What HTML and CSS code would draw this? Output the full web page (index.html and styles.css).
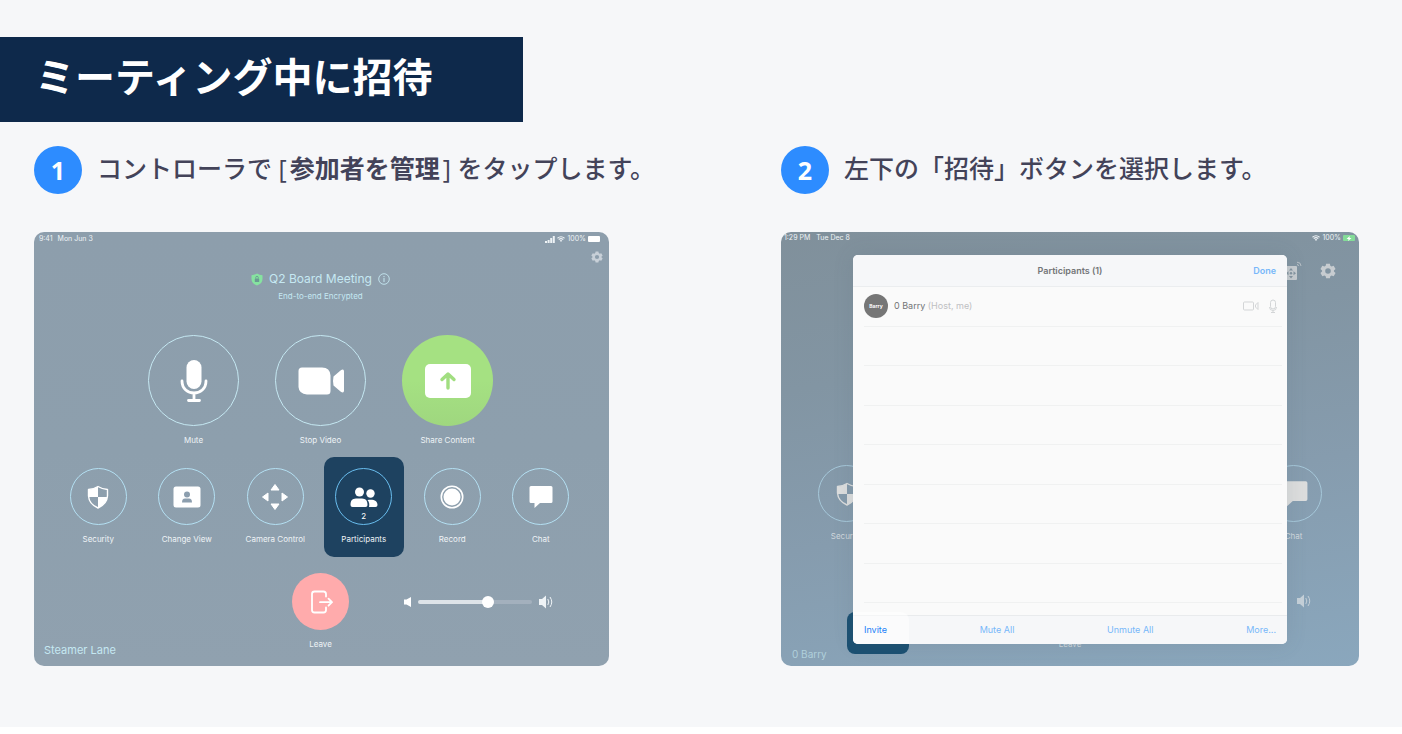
FILE: index.html
```html
<!DOCTYPE html>
<html lang="ja">
<head>
  <meta charset="UTF-8">
  <meta name="viewport" content="width=device-width, initial-scale=1.0">
  <title>ミーティング中に招待</title>
  <link rel="stylesheet" href="styles.css">
</head>
<body>
  <!-- shared icons -->
  <svg class="sprite" aria-hidden="true">
    <symbol id="icon-gear" viewBox="0 0 24 24">
      <path fill="currentColor" fill-rule="evenodd" d="M9.2 1h5.6l.7 3.2 1.9 1.1 3.1-1 2.8 4.8-2.4 2.2v1.4l2.4 2.2-2.8 4.8-3.1-1-1.9 1.1-.7 3.2H9.2l-.7-3.2-1.9-1.1-3.1 1L.7 14.9l2.4-2.2v-1.4L.7 9.1l2.8-4.8 3.1 1 1.9-1.1zM12 7.800a4.200 4.200 0 1 0 0 8.400 4.200 4.200 0 0 0 0-8.400z"/>
    </symbol>
    <symbol id="icon-wifi" viewBox="0 0 16 12">
      <path fill="none" stroke="currentColor" stroke-width="2.2" d="M1 4.500q7-6 14 0M3.500 7.300q4.500-4 9 0"/>
      <path fill="currentColor" d="M5.500 9q2.500-2 5 0L8 12z"/>
    </symbol>
    <symbol id="icon-security" viewBox="0 0 22 24">
      <path fill="none" stroke="currentColor" stroke-width="1.4" stroke-linejoin="round" d="M11 1.500Q15 4 20.500 4.500V11Q20 19 11 23 2 19 1.500 11V4.500Q7 4 11 1.500z"/>
      <path fill="currentColor" d="M11 1.500V12H1.500V4.500Q7 4 11 1.500zM11 12h9.400Q19.500 19 11 23z"/>
    </symbol>
    <symbol id="icon-chat" viewBox="0 0 24 24">
      <path fill="currentColor" d="M2 1h20a1.500 1.500 0 0 1 1.500 1.500v14A1.500 1.500 0 0 1 22 18H11l-5.500 5V18H2a1.500 1.500 0 0 1-1.500-1.500v-14A1.500 1.500 0 0 1 2 1z"/>
    </symbol>
    <symbol id="icon-volume" viewBox="0 0 16 14">
      <path fill="currentColor" d="M1 4h3l4-3.500v13L4 10H1z"/>
      <path fill="none" stroke="currentColor" d="M9.800 4q2 3 0 6M12 2q3.500 5 0 10"/>
    </symbol>
  </svg>

  <main class="page">
    <h1 class="page-title">ミーティング中に招待</h1>

    <div class="steps">
      <section class="step">
        <h2 class="step-title">
          <span class="step-number">1</span>
          <span class="step-text">コントローラで [<strong>参加者を管理</strong>] をタップします。</span>
        </h2>

        <div class="tablet tablet-controller">
          <div class="status">
            <span class="status-left"><span>9:41</span><span>Mon Jun 3</span></span>
            <span class="status-right">
              <svg width="10" height="7" viewBox="0 0 10 7"><path fill="currentColor" d="M0 5h2v2H0zM2.600 4h2v3h-2zM5.200 2h2v5h-2zM7.800 0h2v7h-2z"/></svg>
              <svg width="8" height="6"><use href="#icon-wifi"/></svg>
              <span>100%</span>
              <span class="battery"></span>
            </span>
          </div>

          <div class="toolbar">
            <button class="icon-button" aria-label="Settings"><svg width="12" height="12"><use href="#icon-gear"/></svg></button>
          </div>

          <div class="meeting-name">
            <svg width="12" height="13" viewBox="0 0 12 13"><path fill="#86e3a0" d="M6 .5Q8.500 2 11.500 2.200V6Q11.500 10.500 6 12.500.5 10.500.5 6V2.200Q3.500 2 6 .5z"/><rect x="3.8" y="5.5" width="4.4" height="3.5" rx=".6" fill="#6a9b93"/><path fill="none" stroke="#6a9b93" stroke-width=".9" d="M4.700 5.500V4.600a1.300 1.300 0 0 1 2.600 0v.9"/></svg>
            <span>Q2 Board Meeting</span>
            <svg width="12" height="12" viewBox="0 0 12 12"><circle cx="6" cy="6" r="5.3" fill="none" stroke="currentColor" stroke-width=".9"/><path fill="none" stroke="currentColor" d="M6 5v4M6 3v1.200"/></svg>
          </div>
          <div class="meeting-note">End-to-end Encrypted</div>

          <div class="main-actions">
            <button class="action">
              <span class="circle circle-large">
                <svg width="28" height="44" viewBox="0 0 28 44"><rect x="6.5" y="1" width="15" height="29" rx="7.5" fill="#fff"/><path fill="none" stroke="#fff" stroke-width="2.8" stroke-linecap="round" d="M2 22c0 16 24 16 24 0M14 34v7M8.500 41.500h11"/></svg>
              </span>
              <span>Mute</span>
            </button>
            <button class="action">
              <span class="circle circle-large">
                <svg width="46" height="28" viewBox="0 0 46 28"><path fill="#fff" d="M4 .5h20q8 0 8.500 8V24q0 3.500-3.500 3.500H9Q1 27 .5 20V4Q.5.5 4 .5zM35.500 9.500l7-6q3.500-2.500 3.500 1v19q0 3.500-3.500 1l-7-6q-1-4.500 0-9z"/></svg>
              </span>
              <span>Stop Video</span>
            </button>
            <button class="action">
              <span class="circle circle-large circle-share">
                <svg width="46" height="34" viewBox="0 0 46 34"><rect width="46" height="34" rx="5" fill="#fff"/><path fill="none" stroke="#a1de80" stroke-width="3.4" stroke-linecap="round" stroke-linejoin="round" d="M23 24V10.500M17 15.500l6-5.500 6 5.500"/></svg>
              </span>
              <span>Share Content</span>
            </button>
          </div>

          <div class="sub-actions">
            <button class="action tile">
              <span class="circle"><svg width="22" height="24"><use href="#icon-security"/></svg></span>
              <span>Security</span>
            </button>
            <button class="action tile">
              <span class="circle">
                <svg width="28" height="22" viewBox="0 0 28 22"><rect x=".5" y=".5" width="27" height="21" rx="2.5" fill="#fff"/><circle cx="14" cy="8.5" r="3" fill="#8c9eae"/><path fill="#8c9eae" d="M9 16.500q0-4 3-4h4q3 0 3 4z"/></svg>
              </span>
              <span>Change View</span>
            </button>
            <button class="action tile">
              <span class="circle">
                <svg width="28" height="28" viewBox="0 0 28 28"><path fill="#fff" stroke="#fff" stroke-linejoin="round" d="M14 1.500l4 5.500h-8zM14 26.500l4-5.500h-8zM1.500 14L7 10v8zM26.500 14L21 10v8z"/></svg>
              </span>
              <span>Camera Control</span>
            </button>
            <button class="action tile tile-active">
              <span class="circle">
                <svg width="28" height="22" viewBox="0 0 28 22"><circle cx="9.5" cy="6" r="4.5" fill="#fff"/><circle cx="20.5" cy="7.5" r="4.2" fill="#fff"/><path fill="#fff" d="M.5 19c0-7 4-6.500 8.500-6.500s8.500-.5 8.500 6.500q0 2-2 2h-13q-2 0-2-2zM17.500 14c6-1 10 .5 10 5q0 2-2 2h-6.500q1-4-1.500-7z"/></svg>
                <span class="count">2</span>
              </span>
              <span>Participants</span>
            </button>
            <button class="action tile">
              <span class="circle">
                <svg width="24" height="24" viewBox="0 0 24 24"><circle cx="12" cy="12" r="8.5" fill="#fff"/><circle cx="12" cy="12" r="10.7" fill="none" stroke="#fff" stroke-width="1.6"/></svg>
              </span>
              <span>Record</span>
            </button>
            <button class="action tile">
              <span class="circle"><svg width="24" height="24"><use href="#icon-chat"/></svg></span>
              <span>Chat</span>
            </button>
          </div>

          <div class="bottom">
            <span class="room-name">Steamer Lane</span>
            <button class="action">
              <span class="circle circle-leave">
                <svg width="26" height="24" viewBox="0 0 26 24"><path fill="none" stroke="#fff" stroke-width="1.8" stroke-linecap="round" stroke-linejoin="round" d="M18 6.500V4q0-2.500-2.500-2.500h-9Q4 1.500 4 4v16q0 2.500 2.500 2.500h9Q18 22.500 18 20v-2.500M12 12.200h12M20.500 8.700l3.500 3.500-3.500 3.500"/></svg>
              </span>
              <span>Leave</span>
            </button>
            <label class="volume">
              <svg width="9" height="12" viewBox="0 0 9 12"><path fill="#fff" d="M1 3.500h2.500L8 1v10L3.500 8.500H1z"/></svg>
              <input type="range" min="0" max="100" value="63" aria-label="Volume">
              <svg width="16" height="14"><use href="#icon-volume"/></svg>
            </label>
          </div>
        </div>
      </section>

      <section class="step">
        <h2 class="step-title">
          <span class="step-number">2</span>
          <span class="step-text">左下の「招待」ボタンを選択します。</span>
        </h2>

        <div class="tablet tablet-participants">
          <div class="status">
            <span class="status-left"><span>1:29 PM</span><span>Tue Dec 8</span></span>
            <span class="status-right">
              <svg width="8" height="6"><use href="#icon-wifi"/></svg>
              <span>100%</span>
              <span class="battery battery-charging"><svg width="6" height="5" viewBox="0 0 6 5"><path fill="#fff" d="M3.800 0L.5 3h2L2.200 5 5.500 2h-2z"/></svg></span>
            </span>
          </div>

          <div class="toolbar">
            <button class="icon-button" aria-label="Camera control">
              <svg width="24" height="20" viewBox="0 0 24 20"><rect x="1" y="5" width="18" height="14" rx="1" fill="currentColor"/><path fill="#8494a0" d="M13 7l2 2.500h-4zM13 17.500l2-2.500h-4zM8 12.200l2.500-2v4zM18 12.200l-2.500-2v4z"/><circle cx="13" cy="12.200" r="1.200" fill="#8494a0"/><path fill="none" stroke="currentColor" stroke-width=".8" d="M19 3.500q1.500 0 1.500 1.500M19 1.200q4 0 4 3.800"/></svg>
            </button>
            <button class="icon-button" aria-label="Settings"><svg width="16" height="16"><use href="#icon-gear"/></svg></button>
          </div>

          <div class="side-actions">
            <button class="action">
              <span class="circle"><svg width="22" height="24"><use href="#icon-security"/></svg></span>
              <span>Security</span>
            </button>
            <button class="action">
              <span class="circle"><svg width="28" height="28"><use href="#icon-chat"/></svg></span>
              <span>Chat</span>
            </button>
          </div>

          <div class="side-volume"><svg width="18" height="14"><use href="#icon-volume"/></svg></div>

          <div class="bottom">
            <span class="room-name">0 Barry</span>
            <span class="leave-label">Leave</span>
          </div>

          <div class="invite-shade"></div>

          <div class="dialog" role="dialog" aria-label="Participants">
            <header class="dialog-header">
              <h3>Participants (1)</h3>
              <button class="text-button">Done</button>
            </header>
            <ul class="people">
              <li>
                <span class="avatar">Barry</span>
                <span class="person">0 Barry <small>(Host, me)</small></span>
                <svg width="16" height="10" viewBox="0 0 16 10"><path fill="none" stroke="#d3d5d7" d="M1.500 1h8q1 0 1 1v6q0 1-1 1h-8q-1 0-1-1V2q0-1 1-1zM12.500 4l2.500-2.500v7L12.500 6z"/></svg>
                <svg width="8" height="14" viewBox="0 0 8 14"><path fill="none" stroke="#d3d5d7" d="M1.500 3.500a2.500 2.500 0 0 1 5 0v4a2.500 2.500 0 0 1-5 0zM.5 8q0 3.500 3.500 3.500T7.500 8M4 11.500V13M2 13.500h4"/></svg>
              </li>
              <li></li>
              <li></li>
              <li></li>
              <li></li>
              <li></li>
              <li></li>
              <li></li>
            </ul>
            <footer class="dialog-footer">
              <button class="text-button invite">Invite</button>
              <button class="text-button">Mute All</button>
              <button class="text-button">Unmute All</button>
              <button class="text-button">More...</button>
            </footer>
          </div>
        </div>
      </section>
    </div>
  </main>
</body>
</html>
```
FILE: styles.css
```css
* {
  margin: 0;
  padding: 0;
  box-sizing: border-box;
}

body {
  background-color: #fff;
  font-family: 'Open Sans', 'Noto Sans CJK JP', sans-serif;
}

button {
  border: none;
  background: none;
  color: inherit;
  font: inherit;
  cursor: pointer;
}

svg {
  display: block;
  flex-shrink: 0;
}

.sprite {
  position: absolute;
  width: 0;
  height: 0;
}

.page {
  padding: 37px 0 61px;
  background-color: #f6f7f9;
}

.page-title {
  width: fit-content;
  padding: 10px 90px 15px 35px;
  background-color: #0e294b;
  color: #fff;
  font-size: 40px;
  line-height: 60px;
}

.steps {
  display: grid;
  grid-template-columns: minmax(0, 575fr) minmax(0, 578fr);
  column-gap: 172px;
  padding: 24px 43px 0 34px;
}

.step-title {
  display: flex;
  align-items: center;
  gap: 15px;
  margin-bottom: 38px;
  color: #434359;
  font-size: 25px;
  font-weight: 500;
  line-height: 40px;
  white-space: nowrap;
}

.step-title strong {
  margin: 0 3px;
}

.step-number {
  flex-shrink: 0;
  width: 48px;
  height: 48px;
  border-radius: 50%;
  background-color: #2d8cff;
  color: #fff;
  font-weight: bold;
  line-height: 48px;
  text-align: center;
}

.step-text {
  padding-bottom: 4px;
}

/* tablets */
.tablet {
  position: relative;
  display: flex;
  flex-direction: column;
  min-height: 434px;
  border-radius: 10px;
  color: #eef3f6;
  font-family: Inter, sans-serif;
  font-size: 8px;
  line-height: 12px;
  overflow: hidden;
}

.tablet-controller {
  background: linear-gradient(#8d9eac, #8d9fad 50%, #90a1af);
}

.tablet-participants {
  background: linear-gradient(170deg, #80909b, #8295a3 30%, #869cae 60%, #8aa7bd);
}

.status {
  display: flex;
  justify-content: space-between;
  padding: 1px 9px 0 5px;
  font-size: 7px;
}

.status-left,
.status-right {
  display: flex;
  align-items: center;
  gap: 5px;
}

.status-right {
  gap: 2px;
}

.battery {
  width: 12px;
  height: 6px;
  border-radius: 1px;
  background-color: #fff;
}

.battery-charging {
  display: flex;
  align-items: center;
  justify-content: center;
  background-color: #83dc98;
}

.toolbar {
  display: flex;
  align-items: center;
  justify-content: flex-end;
  height: 24px;
  padding-right: 6px;
  color: #c8d0d8;
}

.meeting-name {
  display: flex;
  align-items: center;
  justify-content: center;
  gap: 6px;
  padding-right: 2px;
  color: #c5e8f2;
  font-size: 12px;
  line-height: 20px;
}

.meeting-note {
  margin: 1px 0 33px;
  padding-right: 2px;
  color: #c5e8f2;
  text-align: center;
}

.action {
  display: flex;
  flex-direction: column;
  align-items: center;
  gap: 8px;
  white-space: nowrap;
}

.circle {
  position: relative;
  display: flex;
  align-items: center;
  justify-content: center;
  width: 57px;
  height: 57px;
  border: 1px solid #b4e0f3;
  border-radius: 50%;
  color: #fff;
}

.circle-large {
  width: 91px;
  height: 91px;
  border-color: #c5e8f2;
}

.circle-share {
  border: none;
  background: linear-gradient(#a5e182 50%, #9fd77f);
}

.circle-leave {
  border: none;
  background-color: #ffabac;
}

.main-actions {
  display: grid;
  grid-template-columns: repeat(3, 127px);
  justify-content: center;
  padding-right: 2px;
}

.sub-actions {
  display: grid;
  grid-template-columns: repeat(6, 1fr);
  justify-items: center;
  padding: 11px 24px 0 20px;
}

.tile {
  width: 80px;
  height: 100px;
  padding-top: 11px;
  justify-content: flex-start;
  border-radius: 10px;
}

.tile-active {
  background-color: #1e4260;
}

.tile-active .circle {
  border-color: #69bdee;
}

.count {
  position: absolute;
  bottom: 2px;
}

.bottom {
  display: grid;
  flex: 1;
  grid-template-columns: 1fr auto 1fr;
  align-items: start;
  padding: 16px 12px 8px 10px;
}

.room-name {
  align-self: end;
  color: #c5e8f2;
  font-size: 11px;
  line-height: 16px;
}

.volume {
  display: flex;
  align-items: center;
  gap: 6px;
  height: 57px;
  margin-left: 54px;
}

.volume input {
  width: 114px;
  height: 12px;
  appearance: none;
  background: none;
}

.volume input::-webkit-slider-runnable-track {
  height: 4px;
  border-radius: 2px;
  background: linear-gradient(90deg, #dde3e8 62%, #a3b0bd 62%);
}

.volume input::-webkit-slider-thumb {
  width: 12px;
  height: 12px;
  margin-top: -4px;
  appearance: none;
  border-radius: 50%;
  background-color: #fff;
}

/* tablet behind the participants dialog */
.tablet-participants .status {
  padding: 0 4px 0 3px;
}

.tablet-participants .status-left {
  gap: 6px;
}

.tablet-participants .toolbar {
  gap: 18px;
  height: 54px;
  padding-right: 23px;
  color: #c7ccd0;
}

.side-actions {
  display: flex;
  justify-content: space-between;
  margin-top: 167px;
  padding: 0 37px;
  color: #cfd7dc;
}

.side-actions .circle {
  border-color: #a6c8da;
  color: #dcdddd;
}

.side-actions .action {
  width: 57px;
}

.side-volume {
  display: flex;
  justify-content: flex-end;
  margin-top: 52px;
  padding-right: 46px;
  color: #c5d0d8;
}

.tablet-participants .bottom {
  align-items: end;
  padding: 0 11px 4px;
}

.tablet-participants .room-name {
  color: #b0d0db;
  font-size: 10px;
}

.leave-label {
  padding-bottom: 12px;
  color: #cfd7dc;
}

.invite-shade {
  position: absolute;
  bottom: 12px;
  left: 66px;
  width: 62px;
  height: 42px;
  border-radius: 8px;
  background-color: #1b5072;
}

.dialog {
  position: absolute;
  inset: 23px 72px 22px;
  display: flex;
  flex-direction: column;
  border-radius: 5px;
  background-color: #fafafa;
  box-shadow: 0 0 20px rgba(80, 100, 115, 0.15);
  font-size: 9px;
  overflow: hidden;
}

/* lit corner round the invite button */
.dialog::after {
  content: '';
  position: absolute;
  bottom: 0;
  left: 0;
  width: 56px;
  height: 32px;
  border-radius: 0 8px 0 0;
  background-color: rgba(255, 255, 255, 0.5);
  pointer-events: none;
}

.dialog-header,
.dialog-footer {
  display: flex;
  align-items: center;
  justify-content: space-between;
  padding: 0 11px;
  background-color: #f6f7f9;
}

.dialog-header {
  display: grid;
  grid-template-columns: 1fr auto 1fr;
  height: 32px;
  border-bottom: 1px solid #ebedef;
}

.dialog-header h3 {
  grid-column: 2;
  color: #737577;
  font-size: 9px;
  font-weight: 600;
}

.dialog-header .text-button {
  justify-self: end;
  font-weight: 600;
}

.text-button {
  color: #78b7fa;
}

.people {
  display: flex;
  flex: 1;
  flex-direction: column;
  padding: 0 5px 12px 11px;
  list-style: none;
}

.people li {
  display: flex;
  flex: 1;
  align-items: center;
  border-bottom: 1px solid #f0f1f1;
}

.people svg {
  margin-right: 5px;
}

.people svg + svg {
  margin-left: 5px;
}

.avatar {
  width: 24px;
  height: 24px;
  border-radius: 50%;
  background-color: #767676;
  color: #fff;
  font-size: 5px;
  font-weight: bold;
  line-height: 24px;
  text-align: center;
}

.person {
  flex: 1;
  padding-left: 6px;
  color: #737577;
}

.person small {
  color: #bec0c2;
  font-size: 9px;
}

.dialog-footer {
  height: 29px;
  border-top: 1px solid #e9ebed;
}

.invite {
  position: relative;
  z-index: 1;
  color: #1a80f8;
}
```
